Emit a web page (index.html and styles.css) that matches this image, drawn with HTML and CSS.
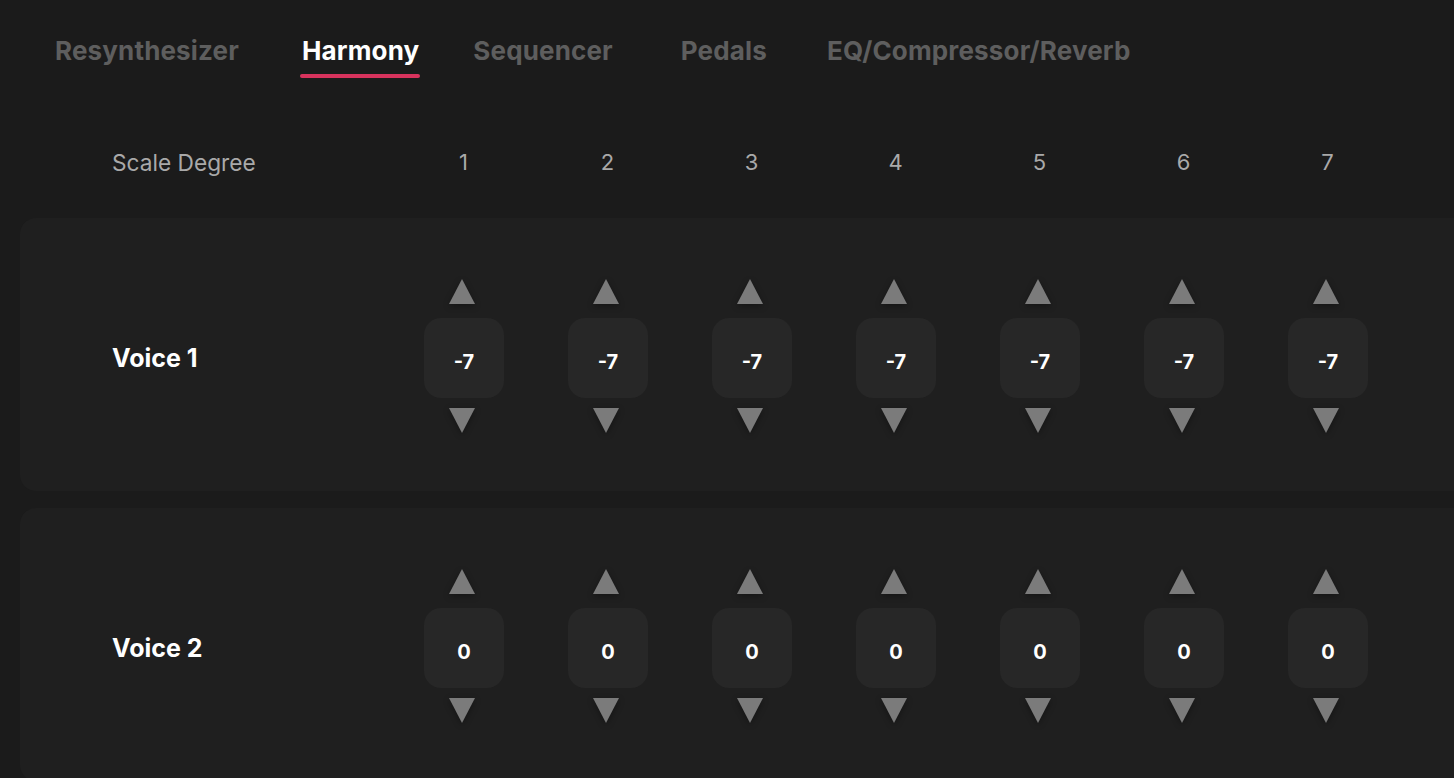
FILE: index.html
```html
<!DOCTYPE html>
<html>
<head>
<meta charset="utf-8">
<link rel="stylesheet" href="styles.css">
</head>
<body>
<nav class="tabs">
  <div class="tab t1">Resynthesizer</div>
  <div class="tab t2 active">Harmony</div>
  <div class="tab t3">Sequencer</div>
  <div class="tab t4">Pedals</div>
  <div class="tab t5">EQ/Compressor/Reverb</div>
</nav>
<main class="content">
  <div class="grid header">
    <div class="label">Scale Degree</div>
    <div class="deg">1</div><div class="deg">2</div><div class="deg">3</div><div class="deg">4</div><div class="deg">5</div><div class="deg">6</div><div class="deg">7</div>
  </div>
  <section class="panel">
    <div class="grid">
      <div class="voice">Voice 1</div>
      <div class="spin"><svg class="arr" viewBox="0 0 26 25"><polygon points="13,0 26,25 0,25"/></svg><div class="box">-7</div><svg class="arr down" viewBox="0 0 26 25"><polygon points="0,0 26,0 13,25"/></svg></div>
      <div class="spin"><svg class="arr" viewBox="0 0 26 25"><polygon points="13,0 26,25 0,25"/></svg><div class="box">-7</div><svg class="arr down" viewBox="0 0 26 25"><polygon points="0,0 26,0 13,25"/></svg></div>
      <div class="spin"><svg class="arr" viewBox="0 0 26 25"><polygon points="13,0 26,25 0,25"/></svg><div class="box">-7</div><svg class="arr down" viewBox="0 0 26 25"><polygon points="0,0 26,0 13,25"/></svg></div>
      <div class="spin"><svg class="arr" viewBox="0 0 26 25"><polygon points="13,0 26,25 0,25"/></svg><div class="box">-7</div><svg class="arr down" viewBox="0 0 26 25"><polygon points="0,0 26,0 13,25"/></svg></div>
      <div class="spin"><svg class="arr" viewBox="0 0 26 25"><polygon points="13,0 26,25 0,25"/></svg><div class="box">-7</div><svg class="arr down" viewBox="0 0 26 25"><polygon points="0,0 26,0 13,25"/></svg></div>
      <div class="spin"><svg class="arr" viewBox="0 0 26 25"><polygon points="13,0 26,25 0,25"/></svg><div class="box">-7</div><svg class="arr down" viewBox="0 0 26 25"><polygon points="0,0 26,0 13,25"/></svg></div>
      <div class="spin"><svg class="arr" viewBox="0 0 26 25"><polygon points="13,0 26,25 0,25"/></svg><div class="box">-7</div><svg class="arr down" viewBox="0 0 26 25"><polygon points="0,0 26,0 13,25"/></svg></div>
    </div>
  </section>
  <section class="panel">
    <div class="grid">
      <div class="voice">Voice 2</div>
      <div class="spin"><svg class="arr" viewBox="0 0 26 25"><polygon points="13,0 26,25 0,25"/></svg><div class="box">0</div><svg class="arr down" viewBox="0 0 26 25"><polygon points="0,0 26,0 13,25"/></svg></div>
      <div class="spin"><svg class="arr" viewBox="0 0 26 25"><polygon points="13,0 26,25 0,25"/></svg><div class="box">0</div><svg class="arr down" viewBox="0 0 26 25"><polygon points="0,0 26,0 13,25"/></svg></div>
      <div class="spin"><svg class="arr" viewBox="0 0 26 25"><polygon points="13,0 26,25 0,25"/></svg><div class="box">0</div><svg class="arr down" viewBox="0 0 26 25"><polygon points="0,0 26,0 13,25"/></svg></div>
      <div class="spin"><svg class="arr" viewBox="0 0 26 25"><polygon points="13,0 26,25 0,25"/></svg><div class="box">0</div><svg class="arr down" viewBox="0 0 26 25"><polygon points="0,0 26,0 13,25"/></svg></div>
      <div class="spin"><svg class="arr" viewBox="0 0 26 25"><polygon points="13,0 26,25 0,25"/></svg><div class="box">0</div><svg class="arr down" viewBox="0 0 26 25"><polygon points="0,0 26,0 13,25"/></svg></div>
      <div class="spin"><svg class="arr" viewBox="0 0 26 25"><polygon points="13,0 26,25 0,25"/></svg><div class="box">0</div><svg class="arr down" viewBox="0 0 26 25"><polygon points="0,0 26,0 13,25"/></svg></div>
      <div class="spin"><svg class="arr" viewBox="0 0 26 25"><polygon points="13,0 26,25 0,25"/></svg><div class="box">0</div><svg class="arr down" viewBox="0 0 26 25"><polygon points="0,0 26,0 13,25"/></svg></div>
    </div>
  </section>
</main>
</body>
</html>
```
FILE: styles.css
```css
html, body {
  margin: 0;
  padding: 0;
  background: #1b1b1b;
  font-family: Inter, "Noto Sans", sans-serif;
  overflow: hidden;
  height: 778px;
}
.tabs {
  display: flex;
  align-items: flex-start;
  height: 78px;
  padding-left: 55px;
  box-sizing: border-box;
}
.tab {
  font-size: 26px;
  font-weight: 700;
  color: #5e5e5e;
  line-height: 30px;
  padding-top: 36px;
  padding-bottom: 8px;
  letter-spacing: 0.15px;
}
.tab.active {
  color: #ffffff;
  position: relative;
}
.tab.active::after {
  content: "";
  position: absolute;
  left: -2px;
  right: -1px;
  bottom: -4px;
  height: 4px;
  border-radius: 2px;
  background: #d8335d;
}
.t1 { margin-right: 63px; }
.t2 { margin-right: 54px; }
.t3 { margin-right: 68px; }
.t4 { margin-right: 60px; }

.content {
  padding-top: 64px;
}
.grid {
  display: grid;
  grid-template-columns: 280px repeat(7, 144px);
  align-items: center;
}
.header {
  padding-left: 112px;
  height: 40px;
  margin-bottom: 36px;
}
.label {
  font-size: 22.7px;
  color: #a9a9a9;
}
.deg {
  text-align: center;
  font-size: 22px;
  color: #a9a9a9;
}
.header .deg { margin-left: -1px; }
.panel {
  margin-left: 20px;
  background: #1f1f1f;
  border-radius: 16px 0 0 16px;
  height: 273px;
  margin-bottom: 17px;
  padding-left: 92px;
  box-sizing: border-box;
  display: flex;
  align-items: center;
}
.voice {
  font-size: 25px;
  font-weight: 700;
  color: #ffffff;
  padding-top: 6px;
}
.spin {
  display: flex;
  flex-direction: column;
  align-items: center;
  padding-top: 3px;
}
.arr {
  width: 26px;
  height: 25px;
  fill: #7b7b7b;
  margin-right: 5px;
  filter: drop-shadow(0 2px 3px rgba(0,0,0,0.35));
}
.box {
  width: 80px;
  height: 80px;
  border-radius: 17px;
  background: #272727;
  color: #fff;
  font-weight: 700;
  font-size: 20px;
  display: flex;
  align-items: center;
  justify-content: center;
  padding-top: 8px;
  box-sizing: border-box;
  margin: 14px 0 10px;
}
```
